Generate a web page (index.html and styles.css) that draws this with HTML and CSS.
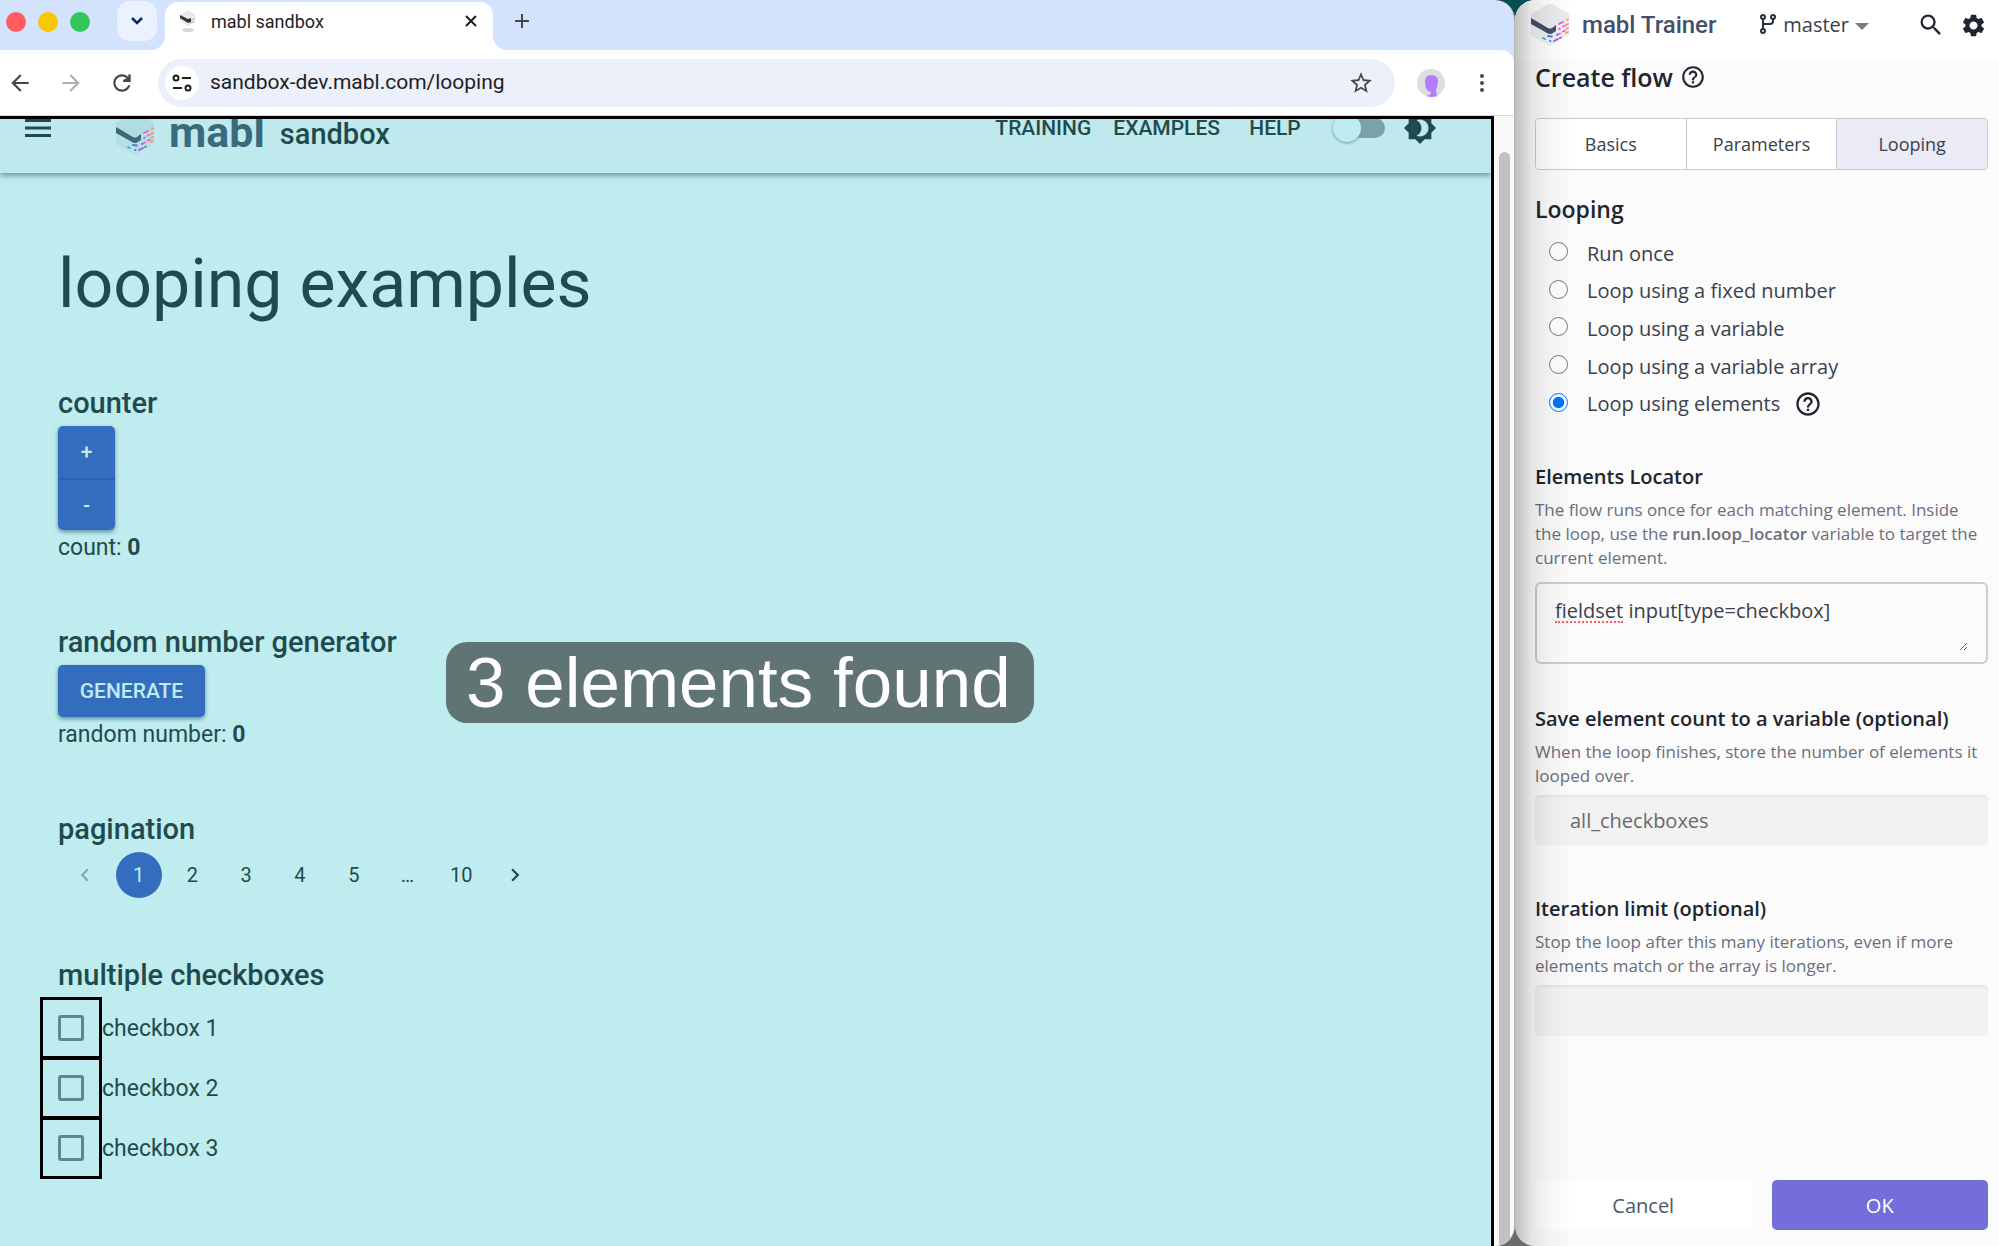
FILE: index.html
```
<!DOCTYPE html>
<html lang="en">
<head>
    <meta charset="UTF-8">
    <meta name="viewport" content="width=device-width, initial-scale=1.0">
    <title>mabl sandbox</title>
    <link rel="stylesheet" href="styles.css">
</head>
<body>
    <svg class="defs" aria-hidden="true">
        <symbol id="cube" viewBox="0 0 40 44">
            <path fill="var(--cube-side)" d="M1 11v21l19 11 19-11V11L20 22z"/>
            <path fill="var(--cube-top)" d="M18 1q2-1 4 0l17 10v4L22 25q-2 1-4 0L1 15v-4z"/>
            <path fill="var(--cube-band)" d="M1 15v6l16 9q3 2 6 0l3-2v-6l-4 3q-2 1-4 0z"/>
            <g stroke-width="1.800" stroke-linecap="round" fill="none">
                <path stroke="#e858cf" d="m29 21 4-2M29 26l1-.5m3-2 1-.5m-5 8 1-.5m3-2 2-1"/>
                <path stroke="#ff9067" d="m37 17 1-.5M34 23l4-2m-1 4.500 1-.5M36 30l2-1"/>
                <path stroke="#22b8c8" d="m13 35 2 1"/>
                <path stroke="#4a7fe6" d="m18 33 4 .500M20 38h.5"/>
                <path stroke="#a05ae0" d="m27 32 .5-.5M24 38l4-2m2-1 1-.5"/>
            </g>
        </symbol>
        <symbol id="help" viewBox="0 0 24 24">
            <path d="M11 18h2v-2h-2v2zm1-16C6.480 2 2 6.480 2 12s4.480 10 10 10 10-4.480 10-10S17.520 2 12 2zm0 18c-4.410 0-8-3.590-8-8s3.590-8 8-8 8 3.590 8 8-3.590 8-8 8zm0-14c-2.210 0-4 1.790-4 4h2c0-1.100.9-2 2-2s2 .9 2 2c0 2-3 1.750-3 5h2c0-2.250 3-2.500 3-5 0-2.210-1.790-4-4-4z"/>
        </symbol>
    </svg>

    <div class="desktop">
        <div class="browser">
            <div class="tab-strip">
                <div class="lights">
                    <span class="light red"></span>
                    <span class="light yellow"></span>
                    <span class="light green"></span>
                </div>
                <button class="tab-search" aria-label="Search tabs">
                    <svg viewBox="0 0 24 24" width="24" height="24"><path d="m7 9 5 5 5-5" fill="none" stroke="#0a2a66" stroke-width="2.500"/></svg>
                </button>
                <div class="tab">
                    <svg class="favicon" viewBox="0 0 20 24" width="20" height="24">
                        <path fill="#e9eaeb" d="m2 6 8-5 7 4v8l-7 4-8-5z"/>
                        <path fill="#33363c" d="m2 6 8 4 3-1v4l-3 1-8-5z"/>
                        <path stroke="#e58fd6" d="m13 12 4-3"/>
                        <path stroke="#7fd8dc" d="m12 15 5-3"/>
                        <ellipse cx="10" cy="21" rx="6" ry="2" fill="#d9d9d9"/>
                    </svg>
                    <span class="tab-title">mabl sandbox</span>
                    <button class="plain" aria-label="Close tab">
                        <svg viewBox="0 0 16 16" width="16" height="16"><path d="m3 3 10 10M13 3 3 13" stroke="#1f1f1f" stroke-width="2"/></svg>
                    </button>
                </div>
                <button class="plain new-tab" aria-label="New tab">
                    <svg viewBox="0 0 16 16" width="16" height="16"><path d="M8 1v14M1 8h14" stroke="#474747" stroke-width="2"/></svg>
                </button>
            </div>

            <div class="toolbar">
                <button class="plain" aria-label="Back"><svg viewBox="0 0 24 24" width="26" height="26"><path fill="#474747" d="M20 11H7.830l5.590-5.590L12 4l-8 8 8 8 1.410-1.410L7.830 13H20v-2z"/></svg></button>
                <button class="plain" aria-label="Forward"><svg viewBox="0 0 24 24" width="26" height="26"><path fill="#b0b0b0" d="m12 4-1.410 1.410L16.170 11H4v2h12.170l-5.580 5.590L12 20l8-8z"/></svg></button>
                <button class="plain" aria-label="Reload"><svg viewBox="0 0 24 24" width="26" height="26"><path fill="#474747" d="M17.650 6.350C16.200 4.900 14.210 4 12 4c-4.420 0-7.990 3.580-7.990 8s3.570 8 7.990 8c3.730 0 6.840-2.550 7.730-6h-2.080c-.82 2.330-3.040 4-5.650 4-3.310 0-6-2.690-6-6s2.690-6 6-6c1.660 0 3.140.69 4.220 1.780L13 9v2h7V4h-2z"/></svg></button>
                <div class="address">
                    <span class="site-info">
                        <svg viewBox="0 0 20 20" width="20" height="20" fill="none" stroke="#1f1f1f" stroke-width="2"><circle cx="4" cy="5" r="2.500"/><path d="M10 5h9M1 15h9"/><circle cx="16" cy="15" r="2.500"/></svg>
                    </span>
                    <input class="url" type="text" aria-label="Address" value="sandbox-dev.mabl.com/looping">
                    <button class="plain" aria-label="Bookmark"><svg viewBox="0 0 24 24" width="26" height="26"><path fill="#474747" d="m22 9.240-7.190-.62L12 2 9.190 8.630 2 9.240l5.460 4.730L5.820 21 12 17.270 18.180 21l-1.630-7.030L22 9.240zM12 15.400l-3.760 2.270 1-4.280-3.320-2.880 4.380-.38L12 6.100l1.710 4.040 4.380.38-3.320 2.880 1 4.280L12 15.400z"/></svg></button>
                </div>
                <svg class="avatar" viewBox="0 0 28 28" width="28" height="28"><circle cx="14" cy="14" r="14" fill="#dedede"/><path fill="#b57cff" d="M8 12q0-6 6-6 7 0 7 6 0 5-2 8 0 5 1 7-5 2-11 0 5-1 5-4-6 0-6-11z"/></svg>
                <button class="plain" aria-label="Menu"><svg viewBox="0 0 24 24" width="24" height="24" fill="#474747"><circle cx="12" cy="5" r="2"/><circle cx="12" cy="12" r="2"/><circle cx="12" cy="19" r="2"/></svg></button>
            </div>

            <div class="viewport">
                <div class="page">
                    <header class="app-bar">
                        <div class="bar-row">
                            <button class="plain" aria-label="Open menu"><svg viewBox="0 0 26 18" width="26" height="18"><path fill="#1f4b4e" d="M0 0h26v3H0zm0 7.500h26v3H0zM0 15h26v3H0z"/></svg></button>
                            <div class="brand">
                                <svg class="brand-cube" width="40" height="44"><use href="#cube"/></svg>
                                <span class="brand-name">mabl</span>
                                <span class="brand-sub">sandbox</span>
                            </div>
                            <nav class="nav">
                                <a href="#training">TRAINING</a>
                                <a href="#examples">EXAMPLES</a>
                                <a href="#help-menu">HELP</a>
                            </nav>
                            <input class="switch" type="checkbox" aria-label="Dark mode">
                            <svg viewBox="0 0 24 24" width="34" height="34"><path fill="#1f4b4e" d="M20 15.310 23.310 12 20 8.690V4h-4.690L12 .69 8.690 4H4v4.690L.69 12 4 15.310V20h4.690L12 23.310 15.310 20H20v-4.690z"/><path fill="#bfeaed" d="M12 18c-.89 0-1.740-.2-2.500-.55C11.560 16.500 13 14.420 13 12s-1.440-4.500-3.500-5.450C10.260 6.200 11.110 6 12 6c3.310 0 6 2.690 6 6s-2.690 6-6 6z"/></svg>
                        </div>
                    </header>

                    <main class="content">
                        <h1>looping examples</h1>

                        <section>
                            <h2>counter</h2>
                            <div class="btn-group">
                                <button class="btn">+</button>
                                <button class="btn">-</button>
                            </div>
                            <p>count: <b>0</b></p>
                        </section>

                        <section>
                            <h2>random number generator</h2>
                            <button class="btn btn-wide">GENERATE</button>
                            <p>random number: <b>0</b></p>
                        </section>

                        <section>
                            <h2>pagination</h2>
                            <nav class="pages" aria-label="pagination">
                                <button disabled aria-label="Previous"><svg viewBox="0 0 24 24" width="26" height="26"><path d="M15.410 7.410 14 6l-6 6 6 6 1.410-1.410L10.830 12z" fill="currentColor"/></svg></button>
                                <button class="current">1</button>
                                <button>2</button>
                                <button>3</button>
                                <button>4</button>
                                <button>5</button>
                                <span>…</span>
                                <button>10</button>
                                <button aria-label="Next"><svg viewBox="0 0 24 24" width="26" height="26"><path d="M10 6 8.590 7.410 13.170 12l-4.580 4.590L10 18l6-6z" fill="currentColor"/></svg></button>
                            </nav>
                        </section>

                        <section>
                            <h2>multiple checkboxes</h2>
                            <fieldset>
                                <label><span class="found"><input type="checkbox"></span>checkbox 1</label>
                                <label><span class="found"><input type="checkbox"></span>checkbox 2</label>
                                <label><span class="found"><input type="checkbox"></span>checkbox 3</label>
                            </fieldset>
                        </section>
                    </main>

                    <div class="toast">3 elements found</div>
                </div>
                <div class="scrollbar"><div class="thumb"></div></div>
            </div>
        </div>

        <aside class="trainer">
            <header class="trainer-bar">
                <svg class="trainer-cube" width="40" height="44"><use href="#cube"/></svg>
                <span class="trainer-name">mabl Trainer</span>
                <button class="plain branch">
                    <svg viewBox="0 0 18 20" width="18" height="20" fill="none" stroke="#2a303c" stroke-width="2"><circle cx="4" cy="3" r="2"/><circle cx="4" cy="17" r="2"/><circle cx="14" cy="3" r="2"/><path d="M4 5v10M14 5v2q0 3-3 3H4"/></svg>
                    master
                    <svg class="caret" viewBox="0 0 14 7" width="14" height="7"><path fill="#7a7a7a" d="M0 0h14L7 7z"/></svg>
                </button>
                <button class="plain" aria-label="Search"><svg viewBox="0 0 24 24" width="28" height="28"><path fill="#20252f" d="M15.500 14h-.79l-.28-.27A6.471 6.471 0 0 0 16 9.500 6.500 6.500 0 1 0 9.500 16c1.610 0 3.090-.59 4.230-1.570l.27.28v.79l5 4.990L20.490 19l-4.990-5zm-6 0C7.010 14 5 11.990 5 9.500S7.010 5 9.500 5 14 7.010 14 9.500 11.990 14 9.500 14z"/></svg></button>
                <button class="plain settings" aria-label="Settings"><svg viewBox="0 0 24 24" width="27" height="27"><path fill="#20252f" d="M19.140 12.940c.04-.3.060-.61.060-.94 0-.32-.02-.64-.07-.94l2.030-1.580c.18-.14.23-.41.12-.61l-1.920-3.320c-.12-.22-.37-.29-.59-.22l-2.390.96c-.5-.38-1.030-.7-1.620-.94l-.36-2.540c-.04-.24-.24-.41-.48-.41h-3.840c-.24 0-.43.17-.47.41l-.36 2.540c-.59.24-1.130.57-1.620.94l-2.390-.96c-.22-.08-.47 0-.59.22L2.740 8.870c-.12.21-.08.47.12.61l2.030 1.580c-.05.3-.09.63-.09.94s.02.64.07.94l-2.030 1.580c-.18.14-.23.41-.12.61l1.920 3.320c.12.22.37.29.59.22l2.390-.96c.5.38 1.030.7 1.620.94l.36 2.540c.05.24.24.41.48.41h3.840c.24 0 .44-.17.47-.41l.36-2.540c.59-.24 1.130-.56 1.620-.94l2.390.96c.22.08.47 0 .59-.22l1.920-3.320c.12-.22.07-.47-.12-.61l-2.010-1.580zM12 15.600c-1.980 0-3.600-1.620-3.600-3.600s1.620-3.600 3.600-3.600 3.600 1.620 3.600 3.600-1.620 3.600-3.600 3.600z"/></svg></button>
            </header>

            <form class="flow">
                <h2 class="flow-title">Create flow <svg class="help" width="26" height="26"><use href="#help"/></svg></h2>
                <div class="tabs">
                    <button type="button">Basics</button>
                    <button type="button">Parameters</button>
                    <button type="button" class="active">Looping</button>
                </div>

                <h3>Looping</h3>
                <div class="options">
                    <label><input type="radio" name="loop">Run once</label>
                    <label><input type="radio" name="loop">Loop using a fixed number</label>
                    <label><input type="radio" name="loop">Loop using a variable</label>
                    <label><input type="radio" name="loop">Loop using a variable array</label>
                    <label><input type="radio" name="loop" checked>Loop using elements <svg class="help" width="28" height="28"><use href="#help"/></svg></label>
                </div>

                <div class="field field-locator">
                    <label for="locator">Elements Locator</label>
                    <p>The flow runs once for each matching element. Inside the loop, use the <b>run.loop_locator</b> variable to target the current element.</p>
                    <div class="locator-box">
                        <textarea id="locator" spellcheck="false">fieldset input[type=checkbox]</textarea>
                        <span class="misspelt"></span>
                    </div>
                </div>

                <div class="field">
                    <label for="variable">Save element count to a variable (optional)</label>
                    <p>When the loop finishes, store the number of elements it looped over.</p>
                    <input id="variable" type="text" value="all_checkboxes">
                </div>

                <div class="field">
                    <label for="limit">Iteration limit (optional)</label>
                    <p>Stop the loop after this many iterations, even if more elements match or the array is longer.</p>
                    <input id="limit" type="text">
                </div>

                <div class="actions">
                    <button type="button">Cancel</button>
                    <button type="button" class="primary">OK</button>
                </div>
            </form>
        </aside>
    </div>
</body>
</html>
```
FILE: styles.css
```
* { box-sizing: border-box; }
body { margin: 0; background: #0a4a4f; font-family: Roboto, sans-serif; }
h1, h2, h3, p, fieldset { margin: 0; padding: 0; border: 0; }
button, input, textarea { font-family: inherit; }
svg { display: block; flex: none; }
.defs { position: absolute; width: 0; height: 0; }
.plain { padding: 0; border: 0; background: none; cursor: pointer; flex: none; }
.desktop { display: flex; height: 100vh; background: linear-gradient(#064d52 0 97%, #6b6b6b 99%); }

/* browser window */
.browser { flex: 1; min-width: 0; display: flex; flex-direction: column; border-radius: 0 20px 20px 0; overflow: hidden; background: #d3e2fd; border-right: 1px solid #b5b5b5; }
.tab-strip { display: flex; align-items: center; height: 50px; flex: none; padding-left: 6px; }
.lights { display: flex; gap: 12px; padding-bottom: 6px; }
.light { width: 20px; height: 20px; border-radius: 50%; }
.red { background: #ff5b60; }
.yellow { background: #f9c800; }
.green { background: #34c659; }
.tab-search { display: flex; align-items: center; justify-content: center; width: 40px; height: 40px; margin: 0 8px 8px 27px; padding: 0; border: 0; border-radius: 13px; background: #ebf1fe; }
.tab { position: relative; display: flex; align-items: center; width: 328px; height: 48px; margin-top: 2px; padding: 0 14px 10px 13px; border-radius: 13px 13px 0 0; background: #fff; }
.tab::before, .tab::after { content: ""; position: absolute; bottom: 0; width: 14px; height: 14px; }
.tab::before { right: 100%; background: radial-gradient(circle at 0 0, transparent 14px, #fff 14px); }
.tab::after { left: 100%; background: radial-gradient(circle at 100% 0, transparent 14px, #fff 14px); }
.tab-title { flex: 1; padding-left: 13px; font-size: 18px; color: #1f1f1f; }
.new-tab { margin: 0 0 8px 21px; }
.toolbar { display: flex; align-items: center; height: 66px; flex: none; padding: 0 20px 0 7px; gap: 25px; background: #fff; border-bottom: 1px solid #d8d8d8; border-radius: 0 13px 0 0; }
.address { flex: 1; display: flex; align-items: center; height: 48px; padding: 0 21px 0 7px; margin: 0 -3px 0 -2px; border-radius: 24px; background: #ebf0fa; }
.site-info { display: flex; align-items: center; justify-content: center; width: 34px; height: 34px; border-radius: 50%; background: #fff; }
.url { flex: 1; padding: 0 0 2px 11px; border: 0; background: none; font-size: 21px; color: #1f1f1f; }

/* sandbox page */
.viewport { flex: 1; min-height: 0; display: flex; background: #fafafa; }
.page { position: relative; flex: 1; min-width: 0; border: solid #000; border-width: 3px 3px 0 0; background: #bfecee; color: #1f4b4e; overflow: hidden; }
.app-bar { position: relative; display: flex; align-items: flex-end; height: 54px; background: #bfe9ec; box-shadow: 0 2px 6px #5f8d91; }
.bar-row { display: flex; align-items: center; flex: 1; height: 90px; padding: 0 54px 0 25px; }
.brand { display: flex; align-items: center; flex: 1; padding: 12px 0 0 64px; }
.brand-cube { --cube-top: #b0dde0; --cube-side: #b5e0e4; --cube-band: #3a6b7d; }
.brand-name { padding: 0 15px 4px 14px; font-size: 43px; line-height: 44px; font-weight: 700; color: #3a6b7d; }
.brand-sub { font-size: 29px; font-weight: 500; }
.nav { display: flex; padding-right: 16px; }
.nav a { min-width: 88px; padding: 0 11px; color: inherit; font-size: 21px; font-weight: 500; text-align: center; text-decoration: none; }
.switch { appearance: none; position: relative; width: 50px; height: 20px; margin: 0 18px 0 0; border-radius: 10px; background: #79a3a6; }
.switch::before { content: ""; position: absolute; left: -2px; top: -4px; width: 28px; height: 28px; border-radius: 50%; background: #bfecee; box-shadow: 0 1px 3px #6f9b9e; }
.content { padding: 60px 58px; }
h1 { font-size: 68px; line-height: 102px; font-weight: 400; margin-bottom: 51px; }
.content h2 { margin-bottom: 5px; font-size: 29px; line-height: 35px; font-weight: 500; }
.content section { margin-bottom: 60px; }
.content p { font-size: 23px; line-height: 35px; }
.btn-group { display: flex; flex-direction: column; width: 57px; border-radius: 5px; box-shadow: 0 2px 4px #5c8f9f; overflow: hidden; }
.btn { height: 52px; border: 0; background: #356dbe; color: #bfecee; font-size: 21px; font-weight: 500; }
.btn + .btn { border-top: 2px solid #2c62af; }
.btn-wide { display: block; width: 147px; border-radius: 5px; box-shadow: 0 2px 4px #5c8f9f; }
.pages { display: grid; grid-template-columns: repeat(9, 1fr); justify-items: center; width: 484px; }
.pages > * { display: flex; align-items: center; justify-content: center; width: 46px; height: 46px; padding: 0; border: 0; border-radius: 50%; background: none; color: #1f4b4e; font-size: 20px; }
.pages .current { background: #356dbe; color: #bfecee; }
.pages :disabled { opacity: .4; }
fieldset { margin-left: -18px; }
fieldset label { display: flex; align-items: center; width: max-content; height: 60px; font-size: 23px; }
.found { display: flex; align-items: center; justify-content: center; width: 62px; height: 62px; border: 3px solid #000; }
.found input { appearance: none; width: 26px; height: 26px; margin: 0; border: 3px solid #5c8a8c; border-radius: 3px; }
.toast { position: absolute; left: 446px; top: 523px; padding: 0 23px 0 20px; border-radius: 21px; background: #607474; color: #fff; font-family: "Liberation Sans", sans-serif; font-size: 71px; line-height: 81px; white-space: nowrap; }
.scrollbar { width: 20px; padding: 36px 4px 0 5px; }
.thumb { height: 100%; border-radius: 6px 6px 0 0; background: #c1c1c1; }

/* trainer panel */
.trainer { position: relative; display: flex; flex-direction: column; width: 484px; flex: none; border-radius: 20px 0 0 20px; overflow: hidden; background: #fbfbfb; color: #20252f; font-family: "Open Sans", sans-serif; }
.trainer::after { content: ""; position: absolute; inset: 0 auto 0 0; width: 60px; background: linear-gradient(90deg, rgba(0,0,0,.24), rgba(0,0,0,.09) 28%, rgba(0,0,0,.03) 60%, transparent); pointer-events: none; }
.trainer-bar { display: flex; align-items: center; height: 60px; flex: none; padding: 0 12px 10px 15px; background: #fff; }
.trainer-cube { --cube-top: #e9ebef; --cube-side: #eef0f3; --cube-band: #44506b; }
.trainer-name { flex: 1; padding-left: 12px; font-family: Roboto, sans-serif; font-size: 24px; font-weight: 500; color: #44506b; }
.branch { display: flex; align-items: center; gap: 6px; margin-right: 48px; padding-bottom: 2px; font-size: 20px; color: #3a404c; }
.caret { margin-top: 5px; }
.settings { margin-left: 15px; }
.flow { flex: 1; display: flex; flex-direction: column; padding: 0 11px 16px 20px; }
.help { fill: #20252f; }
.flow-title { display: flex; align-items: center; gap: 7px; margin-bottom: 24px; font-size: 25px; line-height: 34px; font-weight: 600; }
.tabs { display: flex; border: 1px solid #c9c9d2; border-radius: 4px; overflow: hidden; }
.tabs button { flex: 1; height: 50px; padding: 0; border: 0; background: #fff; color: #3a404c; font-size: 18px; }
.tabs button + button { border-left: 1px solid #c9c9d2; }
.tabs .active { background: #ebeaf7; }
.flow h3 { margin: 20px 0 7px; font-size: 23px; line-height: 38px; font-weight: 600; }
.options { display: grid; grid-auto-rows: 1fr; height: 188px; margin-bottom: 39px; }
.options label { display: flex; align-items: center; font-size: 20px; line-height: 28px; color: #3a404c; }
.options input { width: 19px; height: 19px; margin: 0 19px 4px 14px; }
.options .help { margin-left: 14px; }
.field { margin-bottom: 48px; }
.field-locator { margin-bottom: 40px; }
.field > label { display: block; font-size: 20px; line-height: 30px; font-weight: 600; }
.field p { margin: 6px 0 7px; font-size: 17px; line-height: 24px; color: #6b6f7b; }
.field p b { font-weight: 600; }
.locator-box { position: relative; height: 82px; margin-top: 12px; padding: 13px 18px; border: 2px solid #ccc; border-radius: 6px; }
.locator-box textarea { display: block; width: 100%; height: 54px; padding: 0; border: 0; outline: 0; background: none; font-size: 20px; line-height: 28px; color: #3a404c; }
.misspelt { position: absolute; left: 18px; top: 37px; width: 68px; border-bottom: 2px dotted #ff5b60; }
.field input { display: block; width: 100%; height: 51px; padding: 0 35px; border: 0; border-radius: 5px; background: #f2f2f2; box-shadow: inset 0 2px 2px #e6e6e6; font-size: 20px; color: #6a6a6a; }
.actions { display: flex; gap: 20px; margin-top: auto; }
.actions button { flex: 1; height: 50px; border: 0; border-radius: 5px; background: #fff; color: #4e586b; font-size: 20px; }
.actions .primary { background: #746edb; color: #fff; }
```
